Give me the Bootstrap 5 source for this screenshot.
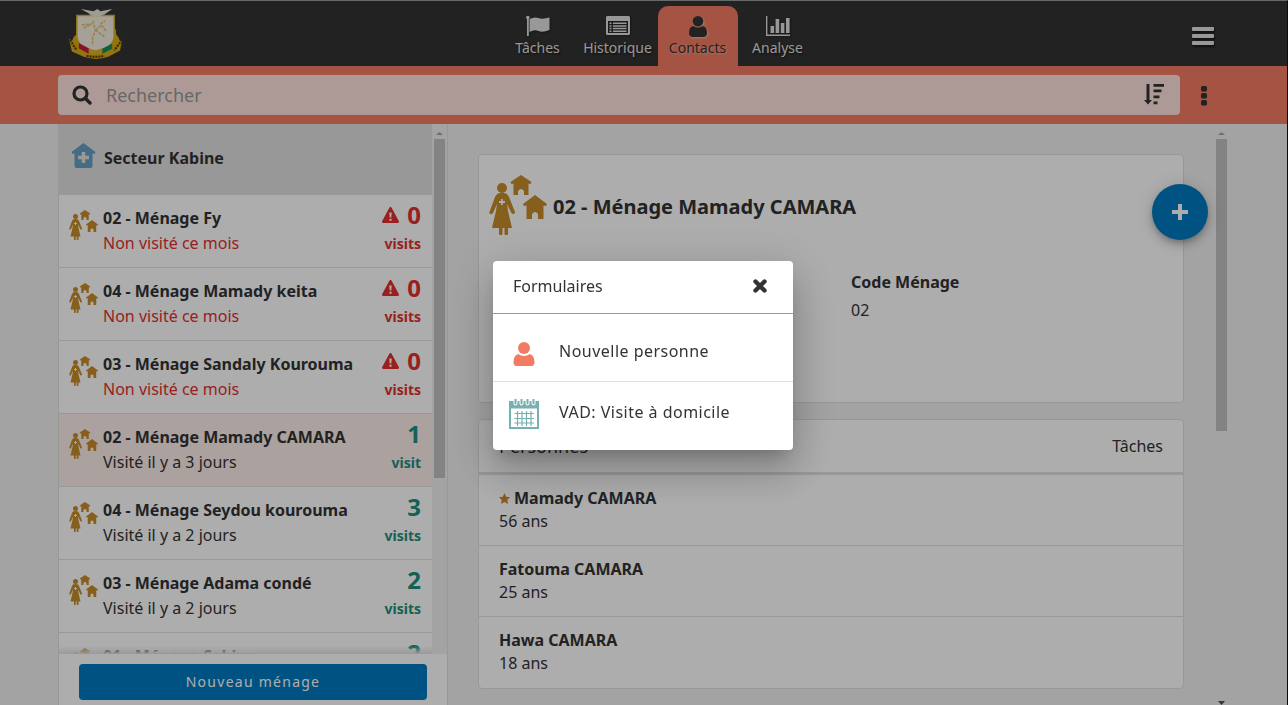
<!DOCTYPE html>
<html lang="fr">
<head>
<meta charset="utf-8">
<meta name="viewport" content="width=device-width, initial-scale=1">
<title>Contacts</title>
<link href="https://cdn.jsdelivr.net/npm/bootstrap@5.3.0/dist/css/bootstrap.min.css" rel="stylesheet">
<style>
:root{--ink:#333;--coral:#f47b63;--line:#e0e0e0;--blue:#007ac0;--gold:#c68c2b;--late:#e33030;--done:#218e7f}
body{font-family:"Noto Sans",sans-serif;font-size:16px;line-height:23px;color:var(--ink);background:#f1f1f1;border-top:1px solid #999c9a;border-right:1px solid #111}
a{color:inherit;text-decoration:none}
svg{display:block;flex:none}
.shell{width:100%;max-width:1171px;margin:0 auto}
.topbar{background:#333;height:65px;flex:none}
.topbar .shell{display:grid;grid-template-columns:439fr 320px 411fr}
.brand{padding:6px 0 0 10px}
.tab{width:80px;height:60px;margin-top:5px;padding-top:7px;font-size:14px;line-height:22px;color:#e0e0e0;text-shadow:1px 1px 2px #111;border-radius:10px 10px 0 0}
.tab svg{height:24px;filter:drop-shadow(1px 1px 1px #1118)}
.tab.current{background:var(--coral);color:var(--ink);text-shadow:1px 1px 2px #fff6}
.tab.current svg{filter:drop-shadow(1px 1px 1px #fff6)}
.plain{border:0;background:none;padding:0;color:inherit}
.menu-btn{color:#e0e0e0;margin-right:15px;padding-top:5px;filter:drop-shadow(1px 2px 1px #0008)}
.searchbar{background:var(--coral);height:58px;flex:none}
.search{background:#ffe4de;border-radius:4px;height:40px;padding:0 14px}
.search input{font-size:18px;color:var(--ink);background:none;border:0;outline:0;min-width:0;padding:0 0 0 14px}
.search input::placeholder{color:#999;opacity:1}
.more-btn{width:49px;padding:2px 2px 0 0}
.side{width:390px;border:1px solid var(--line);border-width:0 1px}
.place{background:#e1e1e1;height:71px;padding:0 13px 2px;margin-left:-1px}
.house-row{height:73px;padding:11px 11px 10px 10px;border-bottom:1px solid var(--line);line-height:25px;background:#fff}
.house-row.picked{background:#fdeeea}
.house-row .pic{width:34px;padding-top:4px}
.count{font-size:24px;font-weight:700;line-height:22px;margin-top:-2px}
.unit{font-size:14px;font-weight:700;line-height:24px;margin-top:6px}
.late{color:var(--late)}
.done{color:var(--done)}
.track{width:15px;padding:8px 2px 0;gap:4px}
.track .thumb{width:11px;background:#c1c1c1}
.up{width:7px;height:3px;margin-left:2px;background:#a3a3a3;clip-path:polygon(50% 0,100% 100%,0 100%)}
.down{width:7px;height:4px;margin-left:2px;background:#505050;clip-path:polygon(0 0,100% 0,50% 100%)}
.side-foot{background:#fff;height:51px;padding:10px 20px;position:relative}
.side-foot::before{content:"";position:absolute;left:0;right:15px;bottom:100%;height:8px;background:linear-gradient(#fff0,#e4e4e4)}
.new-btn{height:36px;padding:0;background:var(--blue);color:#fff;border:0;border-radius:4px;font-size:14px;letter-spacing:.09em;line-height:34px}
.detail{padding:30px 30px 0;gap:16px;overflow:hidden}
.panel{background:#fff;border:1px solid var(--line);border-radius:4px}
.summary{height:249px;padding-top:20px}
.summary-head{padding-left:10px;gap:6px}
.title{font-size:20px;line-height:28px;font-weight:700;padding-top:4px}
.field{padding:9px 20px 0;line-height:28px}
.people-head{height:55px;padding:0 20px;border-bottom:3px solid var(--line)}
.people-head h2{font-size:18px;font-weight:400;line-height:24px}
.person{height:71px;padding:12px 20px;border-bottom:1px solid var(--line)}
.person:last-child{border-bottom-width:0}
.fab{position:absolute;right:21px;top:60px;width:56px;height:56px;border-radius:50%;background:var(--blue);color:#fff;box-shadow:0 3px 5px -1px #0003,0 6px 10px #0002,0 1px 18px #0002}
.veil{position:fixed;inset:0;background:rgba(0,0,0,.32)}
.modal{padding-top:6px;padding-right:2px}
.modal-dialog{max-width:300px}
.modal-content{border:0;border-radius:4px;color:var(--ink);box-shadow:0 11px 15px -7px #0003,0 24px 38px 3px #00000024,0 9px 46px 8px #0000001f}
.modal-header{height:53px;padding:0 26px 2px 20px;border-bottom:1px solid #999}
.form-row{height:60px;padding-left:16px;gap:20px;letter-spacing:.03em}
.form-row svg{margin-top:4px}
.form-row:not(:last-child){border-bottom:1px solid var(--line)}
</style>
</head>
<body class="vh-100 overflow-hidden d-flex flex-column">
<svg width="0" height="0" class="position-absolute" aria-hidden="true">
  <symbol id="household" viewBox="0 0 58 60">
    <g fill="#c68c2b"><circle cx="13" cy="13" r="5"/>
    <path d="M9 18.500q4-1.500 8 0q2 1 3 3.500l6 15q0 2-1.500 2t-2-1L18 29l1 7 4 17h-4v5.500a1.500 1.500 0 0 1-3.500 0V53h-2v5.500a1.500 1.500 0 0 1-3.500 0V53H3l4-17 1-7-4 9q-1 1.500-2.500 1T.5 37L6 22q1-2.500 3-3.500z"/>
    <path d="M32 0l10.500 7-1 2-2-.5V20H35v-4q-3-4-6 0v4h-4.500V8.500l-2 .5-1-2z"/>
    <path d="M46 20l12 9-1 2-2.500-.5V44H49v-5q-3-4-6 0v5h-5.500V30.500L35 31l-1-2z"/></g>
    <path d="M13 24v6M10 27h6" stroke="#fff" stroke-width="1.800"/>
  </symbol>
  <symbol id="warn" viewBox="0 0 17 16"><path fill="#e33030" d="M7.500.6a1.200 1.200 0 0 1 2 0L16.800 14a1.300 1.300 0 0 1-1.200 2H1.400a1.300 1.300 0 0 1-1.200-2z"/><path fill="#fff" d="M7.300 5.500h2.400l-.4 5H7.700zM7.400 11.700h2.200v2H7.400z"/></symbol>
</svg>

<header class="topbar">
  <div class="shell h-100">
    <a href="#" class="brand" aria-label="Accueil"><svg width="56" height="53" viewBox="1 0 57 50" preserveAspectRatio="none">
      <path d="M5 32l2-4q4-2 2-7l3-5h34l4 6q-1 4 2 6l2 4 2-1-2 10-12 6q-12 4-25 0L5 42 2 30z" fill="#d9ab15"/>
      <path d="M3 31l7 10M56 31l-8 10M20 46q9 2 18 0" stroke="#4a3c10" stroke-width="2" stroke-dasharray="2 1" fill="none"/>
      <path d="M10 8h38v20q-1 7-7 10l-12 4-12-4q-6-3-7-10z" fill="#f3eee1" stroke="#dcb225" stroke-width="1.500"/>
      <path d="M12 34l10 5v5l-10-5z" fill="#c51d3b"/><path d="M23 40.500h12V44H23z" fill="#e2b126"/><path d="M36 39.500l10-5v5l-10 4.500z" fill="#129060"/>
      <path d="M14 2l13 2 4-2 3 2 12-2-8 5-6 2q-8 0-10-3z" fill="#e8e5dc"/>
      <path d="M26 13l3 9-3 7v7M29 22l6-5 5 6M29 22l9 6M15 17l10-1-8 4M34 16l5-3" fill="none" stroke="#dfc05c" stroke-width="1.500" stroke-dasharray="3 1"/>
    </svg></a>
    <nav class="d-flex">
      <a href="#" class="tab d-flex flex-column align-items-center"><svg width="24" viewBox="0 0 24 24" fill="currentColor"><circle cx="1.800" cy="4.500" r="1.800"/><path d="M1 5h1.800v18H1zM3.500 6q5-2.500 9-1t11-.5v12.500q-7 3-11 1t-9 1z"/></svg>Tâches</a>
      <a href="#" class="tab d-flex flex-column align-items-center"><svg width="24" viewBox="0 0 24 24" fill="currentColor"><path fill-rule="evenodd" d="M1.500 3h21A1.500 1.500 0 0 1 24 4.500v16a1.500 1.500 0 0 1-1.500 1.500h-21A1.500 1.500 0 0 1 0 20.500v-16A1.500 1.500 0 0 1 1.500 3zM2 8v12h20V8z"/><path d="M3.500 9.500h2V11h-2zM7 9.500h13.500V11H7zM3.500 12.200h2v1.500h-2zM7 12.200h13.500v1.500H7zM3.500 14.800h2v1.500h-2zM7 14.800h13.500v1.500H7zM3.500 17.500h2V19h-2zM7 17.500h13.500V19H7z"/></svg>Historique</a>
      <a href="#" class="tab current d-flex flex-column align-items-center" aria-current="page"><svg width="24" viewBox="0 0 24 24" fill="currentColor"><circle cx="12" cy="8.300" r="5.300"/><path d="M7.500 13q4.500 3 9 0Q21 13.500 21 20q0 4-4 4H7q-4 0-4-4 0-6.500 4.500-7z"/></svg>Contacts</a>
      <a href="#" class="tab d-flex flex-column align-items-center"><svg width="24" viewBox="0 0 24 24" fill="currentColor"><path d="M0 3h1.400v18.600H24V23H0zM4.500 13h3.600v7H4.500zM9.600 6h3.600v14H9.600zM14.800 10h3.600v10h-3.600zM20 5h3.600v15H20z"/></svg>Analyse</a>
    </nav>
    <button class="plain menu-btn ms-auto" aria-label="Menu"><svg width="22" height="18" viewBox="0 0 22 18" fill="currentColor"><rect width="22" height="4" rx="1"/><rect y="7" width="22" height="4" rx="1"/><rect y="14" width="22" height="4" rx="1"/></svg></button>
  </div>
</header>

<div class="searchbar">
  <form class="shell h-100 d-flex align-items-center">
    <div class="search flex-grow-1 d-flex align-items-center">
      <svg width="20" height="20" viewBox="0 0 20 20" fill="none" stroke="#333"><circle cx="8.500" cy="8.500" r="6.500" stroke-width="3.200"/><path d="M13.500 13.500l4.500 4.500" stroke-width="3.400" stroke-linecap="round"/></svg>
      <input type="text" class="flex-grow-1" placeholder="Rechercher" aria-label="Rechercher">
      <button type="button" class="plain" aria-label="Trier"><svg width="24" height="22" viewBox="0 0 24 22" fill="#333"><path d="M4.500 0h3v16H10l-4 4.500L2 16h2.500zM11.500 0H22v2.800H11.500zM11.500 5.500h8v2.800h-8zM11.500 11.500h6v2.800h-6zM11.500 17.500h4v2.800h-4z"/></svg></button>
    </div>
    <button type="button" class="plain more-btn d-flex justify-content-center" aria-label="Plus"><svg width="6" height="20" viewBox="0 0 6 20" fill="#333"><rect width="6" height="5.500" rx="1.500"/><rect y="7" width="6" height="5.500" rx="1.500"/><rect y="14" width="6" height="5.500" rx="1.500"/></svg></button>
  </form>
</div>

<main class="shell flex-grow-1 d-flex position-relative overflow-hidden">
  <aside class="side flex-shrink-0 d-flex flex-column">
    <div class="flex-grow-1 d-flex overflow-hidden">
      <div class="flex-grow-1">
        <a href="#" class="place d-flex align-items-center fw-bold"><svg class="me-2 mb-2" width="25" height="26" viewBox="1 0 24 26"><path d="M13 1l12 9-1 2-2-.5V24q0 2-2 2H6q-2 0-2-2V11.500L2 12l-1-2z" fill="#649fc4"/><path d="M13 10v11M7.500 15.500h11" stroke="#e1e1e1" stroke-width="3.600"/></svg>Secteur Kabine</a>
        <a href="#" class="house-row d-flex"><span class="pic"><svg width="29" height="30"><use href="#household"/></svg></span><span class="flex-grow-1"><b class="d-block">02 - Ménage Fy</b><span class="late">Non visité ce mois</span></span><span class="late text-end"><span class="count d-flex align-items-center justify-content-end gap-2"><svg width="17" height="16"><use href="#warn"/></svg>0</span><span class="unit d-block">visits</span></span></a>
        <a href="#" class="house-row d-flex"><span class="pic"><svg width="29" height="30"><use href="#household"/></svg></span><span class="flex-grow-1"><b class="d-block">04 - Ménage Mamady keita</b><span class="late">Non visité ce mois</span></span><span class="late text-end"><span class="count d-flex align-items-center justify-content-end gap-2"><svg width="17" height="16"><use href="#warn"/></svg>0</span><span class="unit d-block">visits</span></span></a>
        <a href="#" class="house-row d-flex"><span class="pic"><svg width="29" height="30"><use href="#household"/></svg></span><span class="flex-grow-1"><b class="d-block">03 - Ménage Sandaly Kourouma</b><span class="late">Non visité ce mois</span></span><span class="late text-end"><span class="count d-flex align-items-center justify-content-end gap-2"><svg width="17" height="16"><use href="#warn"/></svg>0</span><span class="unit d-block">visits</span></span></a>
        <a href="#" class="house-row picked d-flex"><span class="pic"><svg width="29" height="30"><use href="#household"/></svg></span><span class="flex-grow-1"><b class="d-block">02 - Ménage Mamady CAMARA</b>Visité il y a 3 jours</span><span class="done text-end"><span class="count d-block">1</span><span class="unit d-block">visit</span></span></a>
        <a href="#" class="house-row d-flex"><span class="pic"><svg width="29" height="30"><use href="#household"/></svg></span><span class="flex-grow-1"><b class="d-block">04 - Ménage Seydou kourouma</b>Visité il y a 2 jours</span><span class="done text-end"><span class="count d-block">3</span><span class="unit d-block">visits</span></span></a>
        <a href="#" class="house-row d-flex"><span class="pic"><svg width="29" height="30"><use href="#household"/></svg></span><span class="flex-grow-1"><b class="d-block">03 - Ménage Adama condé</b>Visité il y a 2 jours</span><span class="done text-end"><span class="count d-block">2</span><span class="unit d-block">visits</span></span></a>
        <a href="#" class="house-row d-flex"><span class="pic"><svg width="29" height="30"><use href="#household"/></svg></span><span class="flex-grow-1"><b class="d-block">01 - Ménage Sekina</b></span><span class="done text-end"><span class="count d-block">2</span></span></a>
      </div>
      <div class="track d-flex flex-column"><span class="up"></span><span class="thumb" style="height:65%"></span></div>
    </div>
    <div class="side-foot"><button class="new-btn w-100">Nouveau ménage</button></div>
  </aside>

  <section class="detail flex-grow-1 d-flex flex-column">
    <div class="panel summary">
      <div class="summary-head d-flex align-items-center"><svg width="58" height="60"><use href="#household"/></svg><h1 class="title m-0">02 - Ménage Mamady CAMARA</h1></div>
      <div class="row g-0 pt-4"><div class="col-6"></div><div class="col-6 field"><b class="d-block">Code Ménage</b>02</div></div>
    </div>
    <div class="panel">
      <div class="people-head d-flex align-items-center justify-content-between"><h2 class="m-0">Personnes</h2><span>Tâches</span></div>
      <div class="person"><b class="d-flex align-items-center gap-1"><svg width="11" height="11" viewBox="0 0 12 12"><path fill="#cc842f" d="M6 0l1.800 4 4.200.5-3 3 .8 4.500L6 9.800 2.200 12 3 7.500l-3-3L4.200 4z"/></svg>Mamady CAMARA</b>56 ans</div>
      <div class="person"><b class="d-block">Fatouma CAMARA</b>25 ans</div>
      <div class="person"><b class="d-block">Hawa CAMARA</b>18 ans</div>
    </div>
  </section>
  <div class="track d-flex flex-column me-px"><span class="up"></span><span class="thumb" style="height:51%"></span><span class="down mt-auto"></span></div>
  <button class="plain fab d-flex align-items-center justify-content-center" aria-label="Ajouter"><svg width="16" height="16" viewBox="0 0 16 16"><path d="M8 2v12M2 8h12" stroke="#fff" stroke-width="4" stroke-linecap="square"/></svg></button>
</main>

<div class="veil"></div>
<div class="modal d-block" role="dialog" aria-labelledby="forms-title">
  <div class="modal-dialog modal-dialog-centered">
    <div class="modal-content">
      <div class="modal-header"><span id="forms-title">Formulaires</span><button class="plain" aria-label="Fermer"><svg width="14" height="14" viewBox="0 0 14 14"><path d="M2.500 2.500l9 9M11.500 2.500l-9 9" stroke="#333" stroke-width="4.400" stroke-linecap="round"/></svg></button></div>
      <div class="py-2">
        <a href="#" class="form-row d-flex align-items-center"><svg width="30" height="30" viewBox="0 0 30 30" fill="#f47b63"><circle cx="15" cy="9" r="6"/><path d="M9 15q6 4 12 0 4.500 2 4.500 8 0 4-3 4h-15q-3 0-3-4 0-6 4.500-8z"/></svg>Nouvelle personne</a>
        <a href="#" class="form-row d-flex align-items-center"><svg width="30" height="30" viewBox="0 0 30 30"><path fill="#76b0b0" fill-rule="evenodd" d="M0 2h30v28H0zM2 9.500V28h26V9.500z"/><path d="M6.500 0v4.500M12.500 0v4.500M18.500 0v4.500M24.500 0v4.500" stroke="#fff" stroke-width="4" stroke-linecap="round"/><path d="M6.500 0v4.500M12.500 0v4.500M18.500 0v4.500M24.500 0v4.500" stroke="#76b0b0" stroke-width="2" stroke-linecap="round"/><path d="M8.500 12v15M13 12v15M17.500 12v15M22 12v15M5.500 14.500H25M5.500 19.500H25M5.500 24H25" stroke="#76b0b0" stroke-width="1.200"/></svg>VAD: Visite à domicile</a>
      </div>
    </div>
  </div>
</div>
<script src="https://cdn.jsdelivr.net/npm/bootstrap@5.3.0/dist/js/bootstrap.bundle.min.js"></script>
</body>
</html>
